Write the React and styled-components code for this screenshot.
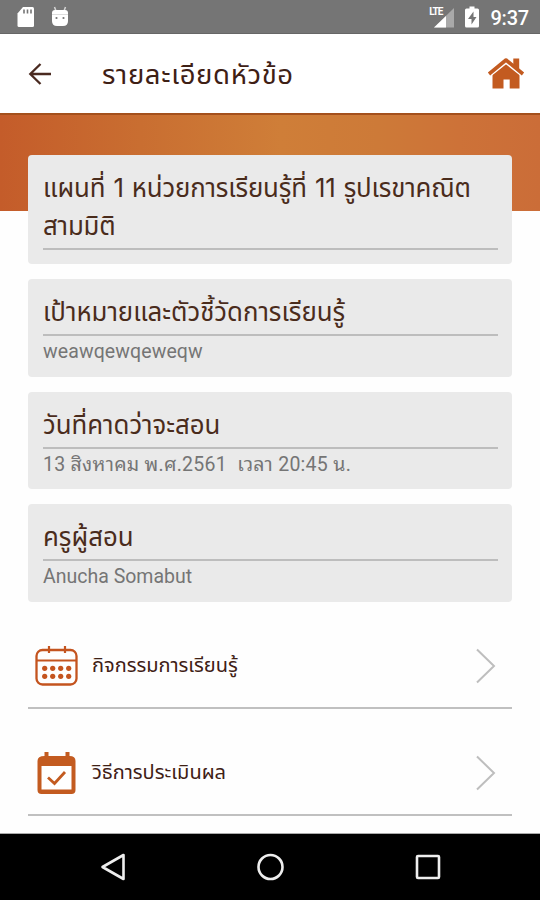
import React from 'react';
import styled, { createGlobalStyle } from 'styled-components';

const GlobalStyle = createGlobalStyle`
  * {
    box-sizing: border-box;
  }

  body {
    margin: 0;
    background-color: #fff;
    font-family: Roboto, 'Noto Sans Thai', 'Noto Sans', sans-serif;
  }

  svg {
    display: block;
    flex-shrink: 0;
    overflow: visible;
  }
`;

const Screen = styled.div`
  width: 540px;
  height: 900px;
  display: flex;
  flex-direction: column;
  overflow: hidden;
  background-color: #fefefe;
`;

const StatusBar = styled.div`
  height: 34px;
  display: flex;
  align-items: center;
  justify-content: space-between;
  padding: 1px 11px 0 17px;
  background-color: #757575;
  border-bottom: 1px solid #666;
  color: #fff;
`;

const StatusGroup = styled.div`
  display: flex;
  align-items: center;
  gap: ${(props) => props.$gap}px;
`;

const Network = styled.div`
  display: flex;
  align-items: flex-start;
  height: 22px;
`;

const NetworkLabel = styled.span`
  margin-right: -8px;
  z-index: 1;
  font-size: 10px;
  font-weight: 700;
  line-height: 12px;
  letter-spacing: -1px;
`;

const Clock = styled.span`
  font-size: 20px;
  font-weight: 500;
  line-height: 32px;
  padding-top: 2px;
  letter-spacing: -0.2px;
`;

const Header = styled.header`
  height: 79px;
  display: flex;
  align-items: center;
  padding: 0 15px 0 28px;
  background-color: #fff;
`;

const Title = styled.h1`
  flex: 1;
  margin: 0 0 0 50px;
  padding-top: 1px;
  color: #3e2015;
  font-family: Inter, 'Noto Sans Thai', 'Noto Sans', sans-serif;
  font-size: 27.5px;
  font-weight: 400;
  line-height: 40px;
  letter-spacing: ${(props) => props.$spacing}px;
  white-space: nowrap;
`;

const Banner = styled.div`
  height: 98px;
  flex-shrink: 0;
  border-top: 2px solid #a4501c;
  background: linear-gradient(90deg, #c45c2a 0%, #c96e31 26%, #cf7e38 52%, #cd7a38 70%, #cd7238 85%, #cb6d38 100%);
`;

const Content = styled.main`
  flex: 1;
  margin-top: -56px;
  padding: 0 28px;
`;

const Cards = styled.div`
  display: flex;
  flex-direction: column;
  gap: 15px;
`;

const Card = styled.section`
  height: ${(props) => props.$height}px;
  padding: 14px 14px 0 15px;
  border-radius: 4px;
  background-color: #eaeaea;
`;

const CardTitle = styled.h2`
  margin: 0;
  padding-bottom: 3px;
  border-bottom: 2px solid #bdbdbd;
  color: #4a2c1c;
  font-family: Inter, 'Noto Sans Thai', 'Noto Sans', sans-serif;
  font-size: 25.8px;
  font-weight: 400;
  line-height: 38px;
  word-spacing: 1px;
  letter-spacing: ${(props) => props.$spacing}px;
  white-space: pre;
`;

const CardText = styled.p`
  margin: 0;
  padding-top: 3px;
  color: #757575;
  font-family: Roboto, 'Noto Sans Thai Looped', 'Noto Sans Thai', 'Noto Sans', sans-serif;
  font-size: 19.5px;
  line-height: 26px;
  letter-spacing: ${(props) => props.$spacing}px;
  white-space: pre;
`;

const Menu = styled.nav`
  display: flex;
  flex-direction: column;
`;

const MenuItem = styled.div`
  height: 107px;
  display: flex;
  align-items: center;
  padding: 22px 16px 0 7px;
  border-bottom: 2px solid #c0c0c0;
`;

const MenuLabel = styled.span`
  flex: 1;
  margin-left: 14px;
  padding-bottom: 2px;
  color: #3e2015;
  font-family: Inter, 'Noto Sans Thai', 'Noto Sans', sans-serif;
  font-size: 20px;
  line-height: 30px;
  letter-spacing: ${(props) => props.$spacing}px;
  white-space: nowrap;
`;

const NavBar = styled.div`
  height: 67px;
  flex-shrink: 0;
  display: flex;
  align-items: center;
  justify-content: space-between;
  padding: 0 99px 0 100px;
  border-top: 1px solid #aaa;
  background-color: #000;
`;

const SdCardIcon = () => (
  <svg width="18" height="21" viewBox="0 0 18 21">
    <path d="M6 0h9.500q1.500 0 1.500 1.500v17q0 1.500-1.500 1.500h-13.500q-1.500 0-1.500-1.500v-12z" fill="#fff" />
    <path d="M7 2.500v4M10.500 2.500v4M14 2.500v4" stroke="#757575" strokeWidth="1.600" />
  </svg>
);

const AndroidIcon = () => (
  <svg width="18" height="21" viewBox="0 0 18 21">
    <path d="M3.500 0l1.500 4M14.500 0l-1.500 4" stroke="#d5d5d5" strokeWidth="1.500" />
    <path d="M1 6q0-3 3-3h10q3 0 3 3v8q0 5-5 5h-6q-5 0-5-5z" fill="#fff" />
    <path d="M1 7.500h16" stroke="#ddd" />
    <circle cx="5.500" cy="11" r="1.100" fill="#757575" />
    <circle cx="12.500" cy="11" r="1.100" fill="#757575" />
  </svg>
);

const SignalIcon = () => (
  <svg width="20" height="22" viewBox="0 0 20 22">
    <path d="M20 2v19.500H0z" fill="#a9a9a9" />
    <path d="M12 10v11.500H0z" fill="#fff" />
  </svg>
);

const BatteryIcon = () => (
  <svg width="14" height="22" viewBox="0 0 14 22">
    <path d="M4.500 0.500h5v2h3q1.500 0 1.500 1.500v16q0 1.500-1.500 1.500h-11q-1.500 0-1.500-1.500v-16q0-1.500 1.500-1.500h3z" fill="#fff" />
    <path d="M8.500 5.500L3 13h3.500v5.500L11.500 11H8.500z" fill="#757575" />
  </svg>
);

const BackIcon = () => (
  <svg width="24" height="24" viewBox="0 0 24 24" fill="none" stroke="#4a2a20" strokeWidth="2.300">
    <path d="M23 12H2.500M12.500 2L2.300 12L12.500 22" />
  </svg>
);

const HomeIcon = () => (
  <svg width="38" height="33" viewBox="0 0 38 33">
    <path d="M5.500 17.500L19 6.500l13.500 11V31.500H22.700v-9h-6.200v9H5.500z" fill="#c35b20" />
    <path d="M2 18L19 4.500L36 18" fill="none" stroke="#fff" strokeWidth="4.500" />
    <path d="M26.300 1.500h5.900v12.500l-5.900-5z" fill="#c35b20" />
    <path d="M2 17L19 3L36 17" fill="none" stroke="#c35b20" strokeWidth="3.600" strokeLinejoin="round" />
  </svg>
);

const CalendarIcon = () => (
  <svg width="43" height="42" viewBox="0 0 43 42">
    <rect x="1.500" y="5" width="40" height="34.500" rx="6" fill="none" stroke="#c4541f" strokeWidth="2.300" />
    <path d="M1.500 15.500h40M14 1v7M30 1v7" stroke="#c4541f" strokeWidth="2.200" />
    {[23.300, 31.300].map((y) =>
      [9.700, 17.700, 25.700, 33.700].map((x) => <circle key={`${x}-${y}`} cx={x} cy={y} r="2.600" fill="#c4541f" />)
    )}
  </svg>
);

const CalendarCheckIcon = () => (
  <svg width="43" height="44" viewBox="0 0 43 44">
    <path d="M9.500 1h4v4h17v-4h4v4q6 0 6 5v29q0 4-4 4h-30q-4 0-4-4v-29q0-5 7-5z" fill="#c35b20" />
    <path d="M6.500 15h30v23.500h-30z" fill="#fff" />
    <path d="M13 26.500l6.500 6L30 21" fill="none" stroke="#c35b20" strokeWidth="2.800" />
  </svg>
);

const ChevronIcon = () => (
  <svg width="20" height="36" viewBox="0 0 20 36">
    <path d="M1 1.500L18 18L1 34.500" fill="none" stroke="#bebebe" strokeWidth="2" />
  </svg>
);

const cards = [
  {
    title: 'แผนที่ 1 หน่วยการเรียนรู้ที่ 11 รูปเรขาคณิต\nสามมิติ',
    height: 109,
    spacing: -0.15,
  },
  {
    title: 'เป้าหมายและตัวชี้วัดการเรียนรู้',
    text: 'weawqewqeweqw',
    height: 98,
    spacing: 0,
    textSpacing: 0.1,
  },
  {
    title: 'วันที่คาดว่าจะสอน',
    text: '13 สิงหาคม พ.ศ.2561  เวลา 20:45 น.',
    height: 97,
    spacing: 0,
    textSpacing: 0.28,
  },
  {
    title: 'ครูผู้สอน',
    text: 'Anucha Somabut',
    height: 98,
    spacing: 0,
    textSpacing: 0,
  },
];

const menuItems = [
  { label: 'กิจกรรมการเรียนรู้', icon: CalendarIcon, spacing: 0 },
  { label: 'วิธีการประเมินผล', icon: CalendarCheckIcon, spacing: 0 },
];

const App = () => {
  return (
    <Screen>
      <GlobalStyle />
      <StatusBar>
        <StatusGroup $gap={16}>
          <SdCardIcon />
          <AndroidIcon />
        </StatusGroup>
        <StatusGroup $gap={11}>
          <Network>
            <NetworkLabel>LTE</NetworkLabel>
            <SignalIcon />
          </Network>
          <BatteryIcon />
          <Clock>9:37</Clock>
        </StatusGroup>
      </StatusBar>

      <Header>
        <BackIcon />
        <Title $spacing={0.65}>รายละเอียดหัวข้อ</Title>
        <HomeIcon />
      </Header>

      <Banner />

      <Content>
        <Cards>
          {cards.map((card) => (
            <Card key={card.title} $height={card.height}>
              <CardTitle $spacing={card.spacing}>{card.title}</CardTitle>
              {card.text && <CardText $spacing={card.textSpacing}>{card.text}</CardText>}
            </Card>
          ))}
        </Cards>

        <Menu>
          {menuItems.map(({ label, icon: Icon, spacing }) => (
            <MenuItem key={label}>
              <Icon />
              <MenuLabel $spacing={spacing}>{label}</MenuLabel>
              <ChevronIcon />
            </MenuItem>
          ))}
        </Menu>
      </Content>

      <NavBar>
        <svg width="26" height="28" viewBox="0 0 26 28">
          <path d="M2.500 14L23.500 2V26z" fill="none" stroke="#eee" strokeWidth="2.600" strokeLinejoin="round" />
        </svg>
        <svg width="28" height="28" viewBox="0 0 28 28">
          <circle cx="13.500" cy="14" r="12" fill="none" stroke="#eee" strokeWidth="2.600" />
        </svg>
        <svg width="26" height="26" viewBox="0 0 26 26">
          <rect x="2" y="2" width="22" height="22" rx="1" fill="none" stroke="#eee" strokeWidth="2.600" />
        </svg>
      </NavBar>
    </Screen>
  );
};

export default App;
